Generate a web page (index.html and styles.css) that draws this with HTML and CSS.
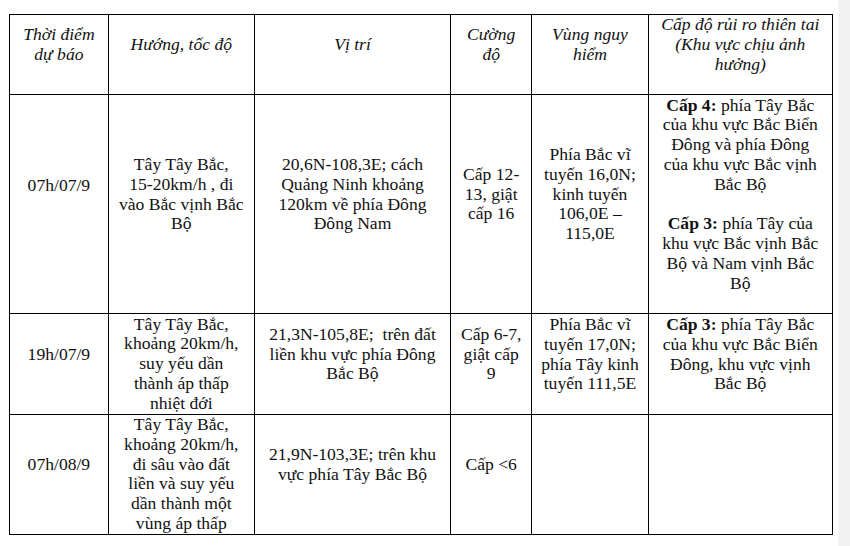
FILE: index.html
```html
<!DOCTYPE html>
<html>
<head>
<meta charset="utf-8">
<title>Dự báo bão</title>
<link rel="stylesheet" href="styles.css">
</head>
<body>
<div class="page">
  <main class="content">
    <table class="forecast">
      <colgroup>
        <col class="c1"><col class="c2"><col class="c3"><col class="c4"><col class="c5"><col class="c6">
      </colgroup>
      <thead>
        <tr class="r-head">
          <th>Thời điểm<br>dự báo</th>
          <th>Hướng, tốc độ</th>
          <th>Vị trí</th>
          <th>Cường<br>độ</th>
          <th>Vùng nguy<br>hiểm</th>
          <th>Cấp độ rủi ro thiên tai<br>(Khu vực chịu ảnh<br>hưởng)</th>
        </tr>
      </thead>
      <tbody>
        <tr class="r1">
          <td class="up2">07h/07/9</td>
          <td class="up">Tây Tây Bắc,<br>15-20km/h , đi<br>vào Bắc vịnh Bắc<br>Bộ</td>
          <td class="up">20,6N-108,3E; cách<br>Quảng Ninh khoảng<br>120km về phía Đông<br>Đông Nam</td>
          <td class="up">Cấp 12-<br>13, giật<br>cấp 16</td>
          <td class="up">Phía Bắc vĩ<br>tuyến 16,0N;<br>kinh tuyến<br>106,0E –<br>115,0E</td>
          <td class="up">
            <p><b>Cấp 4:</b> phía Tây Bắc<br>của khu vực Bắc Biển<br>Đông và phía Đông<br>của khu vực Bắc vịnh<br>Bắc Bộ</p>
            <p><b>Cấp 3:</b> phía Tây của<br>khu vực Bắc vịnh Bắc<br>Bộ và Nam vịnh Bắc<br>Bộ</p>
          </td>
        </tr>
        <tr class="r2">
          <td class="up">19h/07/9</td>
          <td>Tây Tây Bắc,<br>khoảng 20km/h,<br>suy yếu dần<br>thành áp thấp<br>nhiệt đới</td>
          <td class="up">21,3N-105,8E;&nbsp; trên đất<br>liền khu vực phía Đông<br>Bắc Bộ</td>
          <td class="up">Cấp 6-7,<br>giật cấp<br>9</td>
          <td class="up">Phía Bắc vĩ<br>tuyến 17,0N;<br>phía Tây kinh<br>tuyến 111,5E</td>
          <td class="up"><b>Cấp 3:</b> phía Tây Bắc<br>của khu vực Bắc Biển<br>Đông, khu vực vịnh<br>Bắc Bộ</td>
        </tr>
        <tr class="r3">
          <td class="up">07h/08/9</td>
          <td>Tây Tây Bắc,<br>khoảng 20km/h,<br>đi sâu vào đất<br>liền và suy yếu<br>dần thành một<br>vùng áp thấp</td>
          <td class="up">21,9N-103,3E; trên khu<br>vực phía Tây Bắc Bộ</td>
          <td class="up">Cấp &lt;6</td>
          <td></td>
          <td></td>
        </tr>
      </tbody>
    </table>
  </main>
  <div class="scrollbar"></div>
</div>
</body>
</html>
```

FILE: styles.css
```css
html, body {
  margin: 0;
  padding: 0;
  background: #ffffff;
}

.page {
  display: flex;
  height: 546px;
  overflow: hidden;
  font-family: "Liberation Serif", serif;
}

.content {
  flex: 1;
  padding: 14px 0 0 9px;
}

.scrollbar {
  width: 11px;
  background: #f1f1f1;
  border-left: 1px solid #f7f7f7;
}

.forecast {
  border-collapse: collapse;
  table-layout: fixed;
  width: 823px;
  font-family: "Liberation Serif", serif;
  font-size: 17.6px;
  line-height: 19.8px;
  color: #111;
}

.c1 { width: 98.8px; }
.c2 { width: 146px; }
.c3 { width: 196.4px; }
.c4 { width: 81px; }
.c5 { width: 116.6px; }
.c6 { width: 184px; }

.forecast th,
.forecast td {
  border: 1px solid #000;
  padding: 0 4px;
  text-align: center;
  vertical-align: middle;
  font-family: "Liberation Serif", serif;
}

.forecast th {
  font-style: italic;
  font-weight: normal;
  padding-bottom: 19px;
}

.r-head { height: 80px; }
.r1 { height: 219px; }
.r2 { height: 101px; }
.r3 { height: 118.5px; }

.forecast td.up { padding-bottom: 19px; }
.forecast td.up2 { padding-bottom: 37px; }

.forecast p {
  margin: 0;
}

.forecast p + p {
  margin-top: 19.8px;
}

.forecast b {
  font-weight: bold;
}
```
